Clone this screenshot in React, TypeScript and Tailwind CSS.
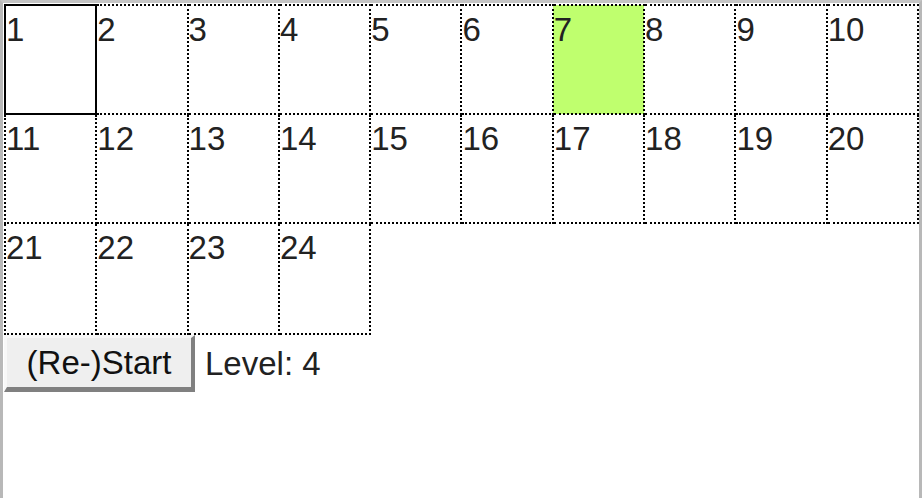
const cells = Array.from({ length: 24 }, (_, i) => i + 1);
const rows = [cells.slice(0, 10), cells.slice(10, 20), cells.slice(20)];

export default function App() {
  return (
    <div
      className="h-[498px] w-full overflow-hidden border-t-[3px] border-l-[3px] border-r-[3px] border-t-[#c4c4c4] border-l-[#b8b8b8] border-r-[#b8b8b8] bg-white text-[#222]"
      style={{ fontFamily: '"Liberation Sans", Arial, sans-serif' }}
    >
      <table className="ml-px mt-px w-[915px] table-fixed border-collapse">
        <tbody>
          {rows.map((row, r) => (
            <tr key={r} className={r === 2 ? "h-[111px]" : "h-[109px]"}>
              {row.map((n) => (
                <td
                  key={n}
                  className={`p-0 pt-[5px] align-top text-[33px] leading-[38px] ${
                    n === 1
                      ? "border-2 border-solid border-black"
                      : "border-[2px] border-dotted border-black"
                  } ${n === 7 ? "bg-[#bfff6e]" : ""}`}
                >
                  {n}
                </td>
              ))}
            </tr>
          ))}
        </tbody>
      </table>
      <div className="ml-px flex items-center gap-[10px]">
        <button className="h-[57px] w-[191px] border-[3px] border-t-[#f8f8f8] border-l-[#f8f8f8] border-b-[#808080] border-r-[#808080] border-b-[5px] border-r-[4px] bg-[#efefef] pb-[2px] text-[33px] text-[#111]">
          (Re-)Start
        </button>
        <span className="text-[33px]">Level: 4</span>
      </div>
    </div>
  );
}
